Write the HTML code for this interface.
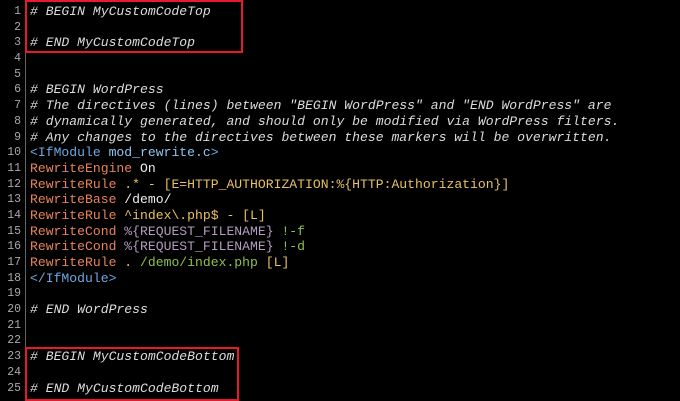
<!DOCTYPE html>
<html><head><meta charset="utf-8"><style>
html,body{margin:0;padding:0;background:#000;width:680px;height:401px;overflow:hidden}
.wrap{position:relative;width:680px;height:401px;font-family:"Liberation Mono",monospace;font-size:13.1px}
.gut{position:absolute;left:0;top:4px;width:21px;text-align:right;color:#a8a8a8;font-size:11.5px}
.gut div,.code div{height:15.7px;line-height:15.7px;white-space:pre}
.vl{position:absolute;left:25px;top:0;width:1px;height:401px;background:#666}
.code{position:absolute;left:30px;top:4px;color:#e8e8e8}
.c{font-style:italic;color:#dcdcdc}
.t{color:#6ea8e0}.a{color:#8cc4f0}
.d{color:#e8825a}.y{color:#e9c062}.p{color:#b59cc0}.g{color:#8fc04a}.w{color:#eee}
.box{position:absolute;border:2px solid #e8192c}
</style></head><body><div class="wrap">
<div class="gut"><div>1</div><div>2</div><div>3</div><div>4</div><div>5</div><div>6</div><div>7</div><div>8</div><div>9</div><div>10</div><div>11</div><div>12</div><div>13</div><div>14</div><div>15</div><div>16</div><div>17</div><div>18</div><div>19</div><div>20</div><div>21</div><div>22</div><div>23</div><div>24</div><div>25</div></div>
<div class="vl"></div>
<div class="code">
<div class="c"># BEGIN MyCustomCodeTop</div>
<div></div>
<div class="c"># END MyCustomCodeTop</div>
<div></div>
<div></div>
<div class="c"># BEGIN WordPress</div>
<div class="c"># The directives (lines) between "BEGIN WordPress" and "END WordPress" are</div>
<div class="c"># dynamically generated, and should only be modified via WordPress filters.</div>
<div class="c"># Any changes to the directives between these markers will be overwritten.</div>
<div><span class="t">&lt;IfModule</span> <span class="a">mod_rewrite.c</span><span class="t">&gt;</span></div>
<div><span class="d">RewriteEngine</span> <span class="w">On</span></div>
<div><span class="d">RewriteRule</span> <span class="y">.* - [E=HTTP_AUTHORIZATION:%{HTTP:Authorization}]</span></div>
<div><span class="d">RewriteBase</span> <span class="w">/demo/</span></div>
<div><span class="d">RewriteRule</span> <span class="y">^index\.php$ - [L]</span></div>
<div><span class="d">RewriteCond</span> <span class="p">%{REQUEST_FILENAME}</span> <span class="g">!-f</span></div>
<div><span class="d">RewriteCond</span> <span class="p">%{REQUEST_FILENAME}</span> <span class="g">!-d</span></div>
<div><span class="d">RewriteRule</span> <span class="y">.</span> <span class="g">/demo/index.php</span> <span class="y">[L]</span></div>
<div><span class="t">&lt;/IfModule&gt;</span></div>
<div></div>
<div class="c"># END WordPress</div>
<div></div>
<div></div>
<div class="c"># BEGIN MyCustomCodeBottom</div>
<div></div>
<div class="c"># END MyCustomCodeBottom</div>
</div>
<div class="box" style="left:25px;top:0;width:214px;height:49px"></div>
<div class="box" style="left:25px;top:347px;width:210px;height:50px"></div>
</div></body></html>
